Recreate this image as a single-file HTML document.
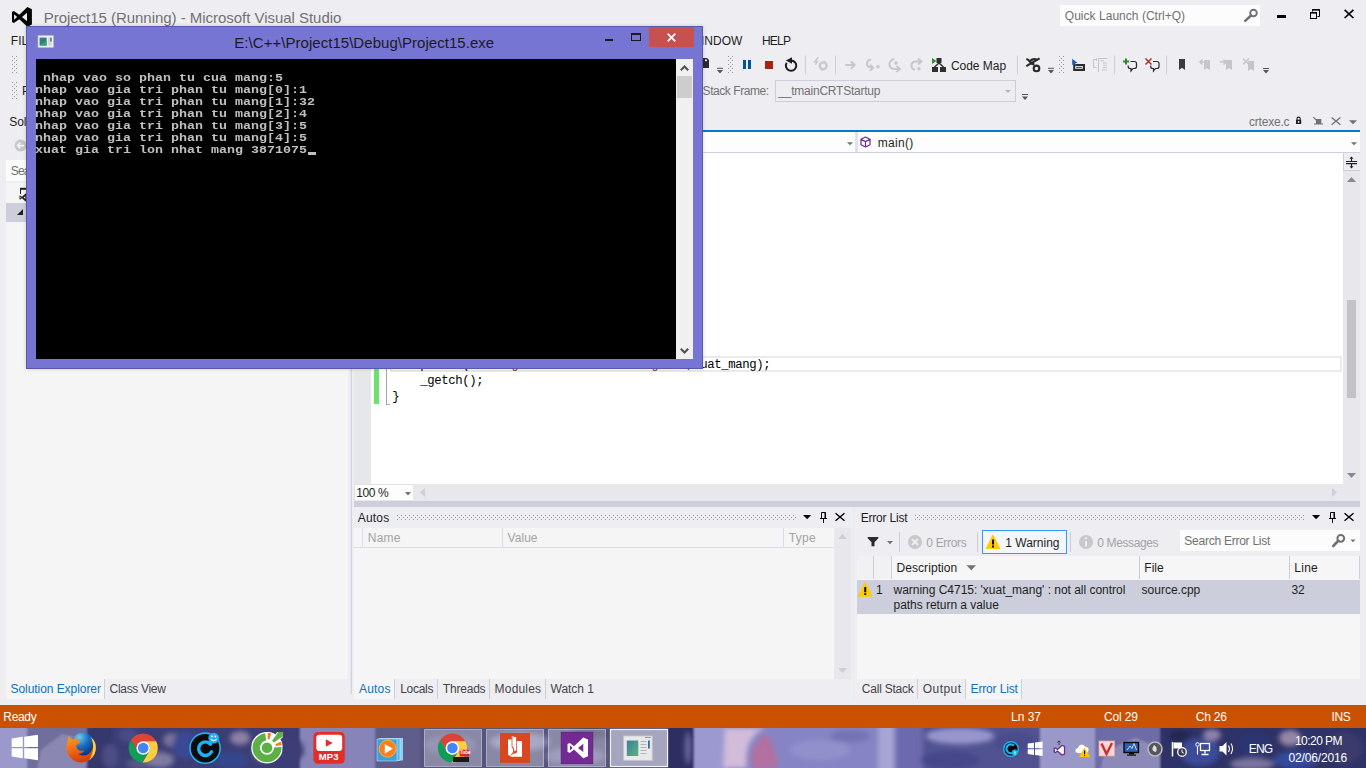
<!DOCTYPE html>
<html lang="en">
<head>
<meta charset="utf-8">
<title>Project15 (Running) - Microsoft Visual Studio</title>
<style>
*{box-sizing:border-box;margin:0;padding:0}
html,body{width:1366px;height:768px;overflow:hidden;background:#EEEEF2;font-family:"Liberation Sans",sans-serif;font-size:12px;color:#1E1E1E}
#root{position:relative;width:1366px;height:768px;overflow:hidden;background:#EEEEF2}
.a{position:absolute}
.t{position:absolute;white-space:nowrap;line-height:1;transform-origin:0 0}
.g{color:#717171}
.d{color:#A2A4A5}
.b{color:#0E70C0}
svg{position:absolute;overflow:visible}
.w{color:#fff}
.con{font-family:"Liberation Mono",monospace;font-weight:bold;font-size:13.330px;line-height:13.680px;color:#C0C0C0;white-space:pre;transform:scaleY(.88);transform-origin:0 0}
.code{white-space:pre;font-family:"Liberation Mono",monospace;font-size:12.300px;letter-spacing:-.380px;color:#000}
/*FIT*/
#t_title{left:43.7px!important;letter-spacing:-0.03px}
#t_ql{left:1064.8px!important;letter-spacing:0.03px}
#t_help{left:761.9px!important;letter-spacing:-0.74px}
#t_window{left:689.7px!important}
#t_sf{left:702.6px!important;letter-spacing:-0.44px}
#t_tm{left:778.3px!important;letter-spacing:-0.23px}
#t_main{left:877.7px!important;letter-spacing:0.30px}
#t_crt{left:1248.9px!important;letter-spacing:-0.19px}
#t_zoom{left:356.3px!important;letter-spacing:-0.43px}
#t_se{left:10.5px!important;letter-spacing:-0.06px}
#t_cv{left:109.6px!important;letter-spacing:-0.32px}
#t_autos{left:357.7px!important;letter-spacing:0.22px}
#t_name{left:367.8px!important;letter-spacing:0.20px}
#t_value{left:507.5px!important;letter-spacing:0.06px}
#t_type{left:788.8px!important;letter-spacing:0.30px}
#t_a2{left:359.1px!important;letter-spacing:0.16px}
#t_loc{left:400.2px!important;letter-spacing:-0.28px}
#t_thr{left:442.8px!important;letter-spacing:-0.20px}
#t_mod{left:494.6px!important;letter-spacing:0.19px}
#t_w1{left:550.6px!important;letter-spacing:-0.05px}
#t_el{left:860.7px!important;letter-spacing:-0.20px}
#t_err{left:926.3px!important;letter-spacing:-0.32px}
#t_warn{left:1005.3px!important;letter-spacing:-0.01px}
#t_msg{left:1097.3px!important;letter-spacing:-0.39px}
#t_sel{left:1184.3px!important;letter-spacing:-0.25px}
#t_desc{left:896.5px!important;letter-spacing:0.07px}
#t_file{left:1144.3px!important;letter-spacing:0.04px}
#t_line{left:1294.3px!important;letter-spacing:0.25px}
#t_w_a{left:893.5px!important;letter-spacing:-0.02px}
#t_w_b{left:893.5px!important;letter-spacing:-0.04px}
#t_src{left:1141.5px!important;letter-spacing:0.01px}
#t_32{left:1291.4px!important;letter-spacing:-0.03px}
#t_cs{left:861.8px!important;letter-spacing:-0.22px}
#t_out{left:922.7px!important;letter-spacing:0.48px}
#t_el2{left:970.6px!important;letter-spacing:-0.16px}
#t_ready{left:3.3px!important;letter-spacing:-0.32px}
#t_ln{left:1011.1px!important;letter-spacing:-0.05px}
#t_col{left:1103.9px!important;letter-spacing:-0.15px}
#t_ch{left:1195.7px!important;letter-spacing:-0.19px}
#t_ins{left:1331.5px!important;letter-spacing:-0.41px}
#t_ctitle{left:234.3px!important;letter-spacing:0.04px}
#t_sol{left:9.3px!important;letter-spacing:-0.06px}
#t_fil{left:10.8px!important}
#t_r1{left:875.9px!important}
#t_sea{left:10.8px!important}
#t_cm{left:950.9px!important;letter-spacing:-0.02px}
#t_mp3{left:318.8px!important;letter-spacing:0.15px}
#t_eng{left:1248.8px!important;letter-spacing:-0.91px}
#t_time{left:1294.9px!important;letter-spacing:-0.53px}
#t_date{left:1288.6px!important;letter-spacing:-0.16px}
/*ENDFIT*/
</style>
</head>
<body>
<div id="root">
<svg width="0" height="0" style="left:0;top:0"><defs><pattern id="gp" width="4" height="4" patternUnits="userSpaceOnUse"><rect x="0" y="0" width="1" height="1" fill="#999"/><rect x="2" y="2" width="1" height="1" fill="#999"/></pattern></defs></svg>

<!-- ===== VS title bar ===== -->
<svg style="left:0;top:0" width="40" height="30" viewBox="0 0 40 30"><path fill="#000" fill-rule="evenodd" d="M27.400 7 31.900 9.200V24.600L27.400 26.800 19.300 19.300 13.800 23.100 12 22.100V11.900L13.800 10.900 19.300 14.700zM27 12.800V21.200L22 17zM14.100 14.300V19.700L17.100 17z"/></svg>
<div class="t g" id="t_title" style="left:44px;top:10px;font-size:15px">Project15 (Running) - Microsoft Visual Studio</div>

<!-- quick launch -->
<div class="a" style="left:1060px;top:5px;width:200px;height:21px;background:#FCFCFC"></div>
<div class="t g" id="t_ql" style="left:1065px;top:10px;font-size:12px">Quick Launch (Ctrl+Q)</div>
<svg style="left:1243px;top:8px" width="14" height="14" viewBox="0 0 14 14"><circle cx="10.500" cy="5" r="3.300" fill="none" stroke="#717171" stroke-width="1.900"/><path d="M8 7.500 2.200 12.800" stroke="#717171" stroke-width="2.500" stroke-linecap="round"/></svg>
<!-- window buttons -->
<div class="a" style="left:1277px;top:15px;width:9px;height:3px;background:#000"></div>
<svg style="left:1309px;top:8px" width="12" height="12" viewBox="0 0 12 12"><path d="M3.5 3.5V1.5h7v7h-2" fill="none" stroke="#000" stroke-width="1"/><path d="M3.5 1.8h7" stroke="#000" stroke-width="1.6"/><rect x="1.5" y="4.5" width="6" height="6" fill="none" stroke="#000"/><path d="M1.5 4.8h6" stroke="#000" stroke-width="1.6"/></svg>
<svg style="left:1344px;top:9px" width="10" height="10" viewBox="0 0 10 10"><path d="M0.6 0.8 9.4 9M9.4 0.8 0.6 9" stroke="#000" stroke-width="1.7"/></svg>

<!-- ===== menu row ===== -->
<div class="t" id="t_fil" style="left:11px;top:35px;font-size:12px">FILE</div>
<div class="t" id="t_window" style="left:691px;top:35px;font-size:12px">WINDOW</div>
<div class="t" id="t_help" style="left:762px;top:35px;font-size:12px">HELP</div>

<!-- ===== toolbars ===== -->
<svg style="left:12px;top:56px" width="5" height="17"><rect width="5" height="17" fill="url(#gp)"/></svg>
<svg style="left:12px;top:82px" width="5" height="17"><rect width="5" height="17" fill="url(#gp)"/></svg>
<div class="t" id="t_proc" style="left:22px;top:85px">Process:</div>
<div class="t g" id="t_sf" style="left:702px;top:84.500px">Stack Frame:</div>
<div class="a" style="left:775px;top:80px;width:241px;height:22px;border:1px solid #CCCEDB;background:#EEEEF2"></div>
<div class="t g" id="t_tm" style="left:779px;top:84.500px">__tmainCRTStartup</div>

<!-- toolbar row 1 icons -->
<svg style="left:700px;top:55px" width="580" height="22" viewBox="700 55 580 22">
<!-- save-all remnant -->
<path d="M700 58h7l2 2v8h-9z" fill="#2B2B2B"/><rect x="705" y="59.5" width="2" height="1.6" fill="#fff"/>
<!-- overflow -->
<path d="M717 68.3h6" stroke="#555" stroke-width="1"/><path d="M717 70h6l-3 3.6z" fill="#555"/>
<!-- pause / stop -->
<rect x="743" y="60" width="3" height="9" fill="#00539C"/><rect x="748" y="60" width="3" height="9" fill="#00539C"/>
<rect x="765" y="61" width="8" height="8" fill="#A1260D"/>
<!-- restart -->
<path d="M791.100 60.400A5.200 5.200 0 1 1 786.700 62.800" fill="none" stroke="#1E1E1E" stroke-width="2"/><path d="M785.800 60.600 792 57.300v6.400z" fill="#1E1E1E"/>
<path d="M805.500 55.500v19M835.500 55.500v19M1017.500 55.500v19M1114.500 55.500v19M1166.500 55.500v19" stroke="#CCCEDB" stroke-width="1"/>
<!-- disabled: apply code changes -->
<g fill="none" stroke="#C8C8CC"><path d="M818.300 57.400 814.700 61.600h2.600l-2 3.200" stroke-width="1.600"/><circle cx="823.200" cy="65.800" r="3.500" stroke-width="2.300" stroke-dasharray="8.600 2.400" stroke-dashoffset="3"/></g>
<path d="M823.500 60.300l3.600 2.300-3.400 1.900zM822.900 71.300l-3.600-2.300 3.400-1.900z" fill="#C8C8CC"/>
<!-- disabled step arrows -->
<g fill="none" stroke="#C8C8CC" stroke-width="2" stroke-linejoin="round">
<path d="M845.300 65h9.500M850.800 61.300 854.800 65l-4 3.700"/>
<path d="M871 59.500q-4 .5-4 4.500 0 3.500 5.500 3.800M870 64.800l3.300 3-3.300 3"/>
<path d="M894.500 59q-5 .8-5 5.300 0 4.500 5.500 4.700h4M896.500 66l3.500 3-3.500 3"/>
<path d="M915 69.800q-3.500-.6-3.500-4.200 0-4 4.500-4.100h5M918 58.500l3.500 3-3.500 3"/>
</g>
<circle cx="878" cy="66.800" r="1.800" fill="#C8C8CC"/><circle cx="896" cy="63" r="1.800" fill="#C8C8CC"/><circle cx="919" cy="68.700" r="1.800" fill="#C8C8CC"/>
<!-- code map -->
<path d="M932 58l4.500 3-4.500 3z" fill="#388A34"/><rect x="936.500" y="58" width="5" height="5" fill="#2F2F2F"/><path d="M939 63l-4.500 4M939 63l4.500 4" stroke="#2F2F2F" stroke-width="1.500"/><rect x="932" y="67" width="6" height="5" fill="#2F2F2F"/><rect x="940" y="67" width="6" height="5" fill="#2F2F2F"/>
<!-- intellitrace-like -->
<g fill="none" stroke="#2B2B2B" stroke-width="2.100"><path d="M1026.300 59q2.200.300 3.600 2.600 1.800 2.800 4.600 2.800"/><path d="M1029.800 61.200q3.600-3.400 7.400-1.200"/><path d="M1039.600 58.300 1026.300 66.200"/><circle cx="1036.500" cy="68.400" r="2.800"/></g>
<path d="M1048 68.300h6" stroke="#555" stroke-width="1"/><path d="M1048 70h6l-3 3.600z" fill="#555"/>
<!-- find in files-like -->
<rect x="1073.200" y="64" width="11.800" height="7" fill="#2B2B2B"/><rect x="1075.200" y="66" width="7.600" height="2.800" fill="#EEEEF2"/><path d="M1076.200 67.400h5.600" stroke="#2B2B2B" stroke-width=".9"/><path d="M1072.200 58.700v6.600l1.700-1.600 1.300 2.600 1.300-.7-1.300-2.500h2.400z" fill="#1C5DAB"/>
<!-- disabled indent icon -->
<g stroke="#C6C6C8" stroke-width="1" fill="none"><path d="M1096.500 59.500h-3v8h3M1096.500 58v3M1098.500 58v14"/><path d="M1099 58.500h8M1100.500 60.800h3.500M1103 63h4M1103 65.300h4M1103 67.500h4M1102 70h5" stroke-width="1.100"/></g>
<!-- comment / uncomment -->
<path d="M1123 61.500h6M1126 58.500v6" stroke="#2C8A2C" stroke-width="2"/>
<path d="M1130.500 61.500h4q2 0 2 2v3q0 2-2 2h-1.500l-2 2.500v-2.500h-.8q-2 0-2-2v-1" fill="none" stroke="#2B2B2B" stroke-width="1.200"/>
<path d="M1145.500 58.500l6 6M1151.500 58.500l-6 6" stroke="#B0301A" stroke-width="1.500"/>
<path d="M1153 61.500h4q2 0 2 2v3q0 2-2 2h-1.500l-2 2.500v-2.500h-.8q-2 0-2-2v-1" fill="none" stroke="#2B2B2B" stroke-width="1.200"/>
<!-- bookmarks -->
<path d="M1179 59h6v11l-3-2.200-3 2.200z" fill="#3B3B3B"/>
<g fill="#C6C6C8"><path d="M1204 60h6v10l-3-2-3 2z"/><path d="M1226 60h6v10l-3-2-3 2z"/><path d="M1248 61h6v10l-3-2-3 2z"/></g>
<g fill="none" stroke="#C6C6C8" stroke-width="1.500"><path d="M1206 62h-6M1202.500 59.500l-2.500 2.500 2.500 2.500"/><path d="M1220 62h6M1223.500 59.500l2.500 2.500-2.500 2.500"/><path d="M1243 58.500l6 6M1249 58.500l-6 6"/></g>
<path d="M1263 68.500h6" stroke="#555" stroke-width="1"/><path d="M1263 70h6l-3 3.600z" fill="#555"/>
</svg>
<svg style="left:728px;top:56px" width="5" height="17"><rect width="5" height="17" fill="url(#gp)"/></svg>
<svg style="left:1059px;top:56px" width="5" height="17"><rect width="5" height="17" fill="url(#gp)"/></svg>
<div class="t" id="t_cm" style="left:951px;top:60px">Code Map</div>
<!-- row 2 extras -->
<svg style="left:1004px;top:89px" width="8" height="5" viewBox="0 0 8 5"><path d="M1 1h6L4 4z" fill="#B5B6BE"/></svg>
<svg style="left:1021px;top:93px" width="8" height="8" viewBox="0 0 8 8"><path d="M1 1.500h6" stroke="#555" stroke-width="1"/><path d="M1 3.500h6L4 7z" fill="#555"/></svg>

<!-- ===== document well ===== -->
<div class="a" style="left:354px;top:130px;width:1006px;height:2px;background:#007ACC"></div>
<div class="a" style="left:354px;top:132px;width:1006px;height:22px;background:#FDFDFD;border-bottom:2px solid #CED0DD"></div>
<div class="a" style="left:855px;top:132px;width:3px;height:20px;background:#E0E1EA"></div>
<div class="t" id="t_main" style="left:878px;top:137px">main()</div>
<div class="t g" id="t_crt" style="left:1249px;top:116px">crtexe.c</div>
<svg style="left:1290px;top:114px" width="70" height="34" viewBox="1290 114 70 34">
<path d="M1296 119.700h5.200v4.300h-5.200z" fill="#1E1E1E"/><path d="M1297 120v-1.200q0-1.700 1.600-1.700t1.600 1.700v1.200" fill="none" stroke="#1E1E1E" stroke-width="1.100"/><rect x="1297.900" y="121" width="1.400" height="1.800" fill="#EEEEF2"/>
<path d="M1316 119h5.300v4.500h-5.300zM1314 123.500h9v1.100h-9z" fill="#717171"/><path d="M1313.300 117.200l3 3" stroke="#717171" stroke-width="1.200"/>
<path d="M1331.600 117.400l8.800 7.400M1340.400 117.400l-8.800 7.400" stroke="#717171" stroke-width="1.300"/>
<path d="M1349 120.200h8l-4 4z" fill="#717171"/>
<path d="M1351 142.200h6l-3 3z" fill="#717171"/>
</svg>
<svg style="left:847px;top:142px" width="7" height="4" viewBox="0 0 7 4"><path d="M0 .2h6l-3 3z" fill="#717171"/></svg>
<svg style="left:860px;top:136px" width="11" height="12" viewBox="0 0 11 12"><path d="M5.500 1 10 3.300v5.400L5.500 11 1 8.700V3.300zM1 3.300l4.500 2.300L10 3.300M5.500 5.600V11" fill="none" stroke="#652D90" stroke-width="1.200" stroke-linejoin="round"/></svg>
<!-- editor -->
<div class="a" style="left:354px;top:153px;width:989px;height:331px;background:#fff"></div>
<div class="a" style="left:354px;top:153px;width:17px;height:331px;background:#E6E7E8"></div>
<div class="a" style="left:1343px;top:153px;width:17px;height:331px;background:#E8E8EC"></div>
<div class="a" style="left:1347px;top:300px;width:9px;height:98px;background:#C2C3C9"></div>
<div class="a" style="left:1343px;top:153px;width:17px;height:18px;background:#EEEEF2;border-left:1px solid #CCCEDB;border-bottom:1px solid #CCCEDB"></div>
<svg style="left:1346px;top:156px" width="12" height="13" viewBox="0 0 12 13"><path d="M0 5.500h11M0 7.600h11" stroke="#1E1E1E" stroke-width="1.100"/><path d="M5.500 5V1.500M5.500 8v3.500" stroke="#1E1E1E" stroke-width="1.100"/><path d="M3.500 2.800 5.500.4l2 2.400zM3.500 10.200l2 2.400 2-2.400z" fill="#1E1E1E"/></svg>
<svg style="left:1347px;top:177px" width="9" height="5" viewBox="0 0 9 5"><path d="M4.500 0 9 5H0z" fill="#868999"/></svg>
<svg style="left:1347px;top:473px" width="9" height="5" viewBox="0 0 9 5"><path d="M4.500 5 9 0H0z" fill="#868999"/></svg>
<div class="a" style="left:354px;top:484px;width:1006px;height:17px;background:#E8E8EC"></div>
<div class="a" style="left:354px;top:484px;width:59px;height:16px;background:#FDFDFD;border:1px solid #DFE0EA;border-right:0;border-bottom:0"></div>
<svg style="left:405px;top:492px" width="6" height="4" viewBox="0 0 6 4"><path d="M0 0h6L3 3.500z" fill="#717171"/></svg>
<svg style="left:420px;top:488px" width="5" height="9" viewBox="0 0 5 9"><path d="M5 0v9L0 4.500z" fill="#CDCED6"/></svg>
<svg style="left:1332px;top:488px" width="5" height="9" viewBox="0 0 5 9"><path d="M0 0v9L5 4.500z" fill="#CDCED6"/></svg>
<div class="t" id="t_zoom" style="left:357px;top:487px">100 %</div>
<div class="a" style="left:354px;top:501px;width:1006px;height:6px;background:#CCCEDB"></div>
<div class="a" style="left:853px;top:508px;width:1px;height:192px;background:#E7E8F0"></div><div class="a" style="left:350px;top:104px;width:1px;height:590px;background:#E4E5EE"></div><div class="a" style="left:351px;top:104px;width:1px;height:590px;background:#D2D3E0"></div>
<!-- code -->
<div class="a" style="left:390px;top:356px;width:952px;height:16px;border:2px solid #EAEAEA"></div>
<div class="a" style="left:374px;top:369px;width:5px;height:35px;background:#6CE26C"></div>
<div class="a" style="left:386px;top:369px;width:4px;height:36px;border-left:1px solid #A5A5A5;border-bottom:1px solid #A5A5A5"></div>
<pre class="t code" id="c1" style="left:392.200px;top:359.200px">    printf(<span style="color:#A31515">"xuat gia tri lon nhat mang %d"</span>,xuat_mang);</pre>
<pre class="t code" id="c2" style="left:392.200px;top:375.200px">    _getch();</pre>
<pre class="t code" id="c3" style="left:392.200px;top:391.200px">}</pre>

<!-- ===== Solution Explorer (left) ===== -->
<div class="t" id="t_sol" style="left:10px;top:116px">Solution Explorer</div>
<svg style="left:14px;top:139px" width="13" height="13" viewBox="0 0 13 13"><circle cx="6.600" cy="6.600" r="6" fill="#C6C6C8"/><path d="M10 6.600H4M6.300 3.800 3.500 6.600 6.300 9.400" fill="none" stroke="#F5F5F7" stroke-width="1.600"/></svg>
<div class="a" style="left:6px;top:160px;width:342px;height:21px;background:#FCFCFC"></div>
<div class="t g" id="t_sea" style="left:11px;top:165px;letter-spacing:-.900px">Search Solution Explorer (Ctrl+;)</div>
<div class="a" style="left:6px;top:183px;width:342px;height:496px;background:#F5F5F5"></div>
<div class="a" style="left:6px;top:203px;width:342px;height:19px;background:#CCCEDB"></div>
<svg style="left:19px;top:187px" width="14" height="15" viewBox="0 0 14 15"><path d="M1.500 7V1.500h11V13" fill="none" stroke="#1E1E1E" stroke-width="1"/><path d="M1 1.800h12" stroke="#1E1E1E" stroke-width="2"/><path fill="#1E1E1E" fill-rule="evenodd" d="M6.500 6.500 8.500 7.500v6l-2 1-3.500-3.300-1.800 1.400-.7-.4V8.800l.7-.4 1.800 1.400zM6.300 9v3L4.600 10.500zM1.500 9.600v1.800l.9-.9z"/></svg>
<svg style="left:16px;top:208px" width="8" height="8" viewBox="0 0 8 8"><path d="M7 1v6H1z" fill="#1E1E1E"/></svg>
<div class="a" style="left:6px;top:679px;width:99px;height:20px;background:#F5F5F5;border-right:1px solid #CCCEDB"></div>
<div class="t b" id="t_se" style="left:11px;top:683px">Solution Explorer</div>
<div class="t" id="t_cv" style="left:110px;top:683px;color:#444">Class View</div>

<!-- ===== Autos panel ===== -->
<div class="t" id="t_autos" style="left:358px;top:512px">Autos</div>
<svg style="left:397px;top:515px" width="399" height="5"><rect width="399" height="5" fill="url(#gp)"/></svg>
<svg style="left:803px;top:511px" width="44" height="13" viewBox="0 0 44 13"><path d="M0 4h8.200L4.100 8.200z" fill="#000"/><path d="M18.500 1.500h4v6h-4z" fill="none" stroke="#000" stroke-width="1"/><path d="M21.500 1.500h1.500v6h-1.500zM17 7h7v1h-7zM20 8h1v4h-1z" fill="#000"/><path d="M32.500 2.300 41.500 9.700M41.500 2.300 32.500 9.700" stroke="#000" stroke-width="1.400"/></svg>
<div class="a" style="left:354px;top:528px;width:497px;height:151px;background:#F5F5F5"></div>
<div class="a" style="left:354px;top:528px;width:480px;height:20px;border-bottom:1px solid #DCDDE6"></div>
<div class="a" style="left:362px;top:528px;width:1px;height:19px;background:#DCDDE6"></div>
<div class="a" style="left:502px;top:528px;width:1px;height:19px;background:#DCDDE6"></div>
<div class="a" style="left:783px;top:528px;width:1px;height:19px;background:#DCDDE6"></div>
<div class="t d" id="t_name" style="left:368px;top:532px">Name</div>
<div class="t d" id="t_value" style="left:508px;top:532px">Value</div>
<div class="t d" id="t_type" style="left:789px;top:532px">Type</div>
<div class="a" style="left:834px;top:528px;width:17px;height:151px;background:#E8E8EC"></div>
<svg style="left:838px;top:534px" width="9" height="5" viewBox="0 0 9 5"><path d="M4.500 0 9 5H0z" fill="#CDCED6"/></svg>
<svg style="left:838px;top:668px" width="9" height="5" viewBox="0 0 9 5"><path d="M4.500 5 9 0H0z" fill="#CDCED6"/></svg>
<div class="a" style="left:354px;top:679px;width:41px;height:20px;background:#F5F5F5;border-right:1px solid #CCCEDB"></div>
<div class="a" style="left:437px;top:679px;width:1px;height:20px;background:#CCCEDB"></div><div class="a" style="left:489px;top:679px;width:1px;height:20px;background:#CCCEDB"></div><div class="a" style="left:545px;top:679px;width:1px;height:20px;background:#CCCEDB"></div>
<div class="t b" id="t_a2" style="left:359px;top:683px">Autos</div>
<div class="t" id="t_loc" style="left:400px;top:683px;color:#444">Locals</div>
<div class="t" id="t_thr" style="left:443px;top:683px;color:#444">Threads</div>
<div class="t" id="t_mod" style="left:495px;top:683px;color:#444">Modules</div>
<div class="t" id="t_w1" style="left:551px;top:683px;color:#444">Watch 1</div>

<!-- ===== Error List panel ===== -->
<div class="t" id="t_el" style="left:861px;top:512px">Error List</div>
<svg style="left:915px;top:515px" width="389" height="5"><rect width="389" height="5" fill="url(#gp)"/></svg>
<svg style="left:1312px;top:511px" width="44" height="13" viewBox="0 0 44 13"><path d="M0 4h8.200L4.100 8.200z" fill="#000"/><path d="M18.500 1.500h4v6h-4z" fill="none" stroke="#000" stroke-width="1"/><path d="M21.500 1.500h1.500v6h-1.500zM17 7h7v1h-7zM20 8h1v4h-1z" fill="#000"/><path d="M32.500 2.300 41.500 9.700M41.500 2.300 32.500 9.700" stroke="#000" stroke-width="1.400"/></svg>
<div class="a" style="left:857px;top:556px;width:503px;height:123px;background:#F6F6F6"></div>
<div class="a" style="left:857px;top:580px;width:503px;height:34px;background:#CCCEDB"></div>
<div class="a" style="left:857px;top:556px;width:34px;height:23px;background:#F1F1F4"></div>
<svg style="left:857px;top:528px" width="503" height="72" viewBox="857 528 503 72">
<path d="M867.700 537h10.600v1.200l-3.800 4v4h-3v-4l-3.800-4z" fill="#2B2B2B"/>
<path d="M887 541h6l-3 3.200z" fill="#717171"/>
<path d="M899.500 532v20M977.500 532v20M1070.500 532v20" stroke="#CCCEDB" stroke-width="1"/>
<circle cx="915" cy="542" r="7" fill="#C8C8CA"/><path d="M912 539l6 6M918 539l-6 6" stroke="#EEEEF2" stroke-width="2"/>
<circle cx="1086" cy="542" r="7" fill="#C8C8CA"/><path d="M1086 541v5.500" stroke="#EEEEF2" stroke-width="2"/><circle cx="1086" cy="538.300" r="1.200" fill="#EEEEF2"/>
<path d="M873.500 556v23M891.500 556v23M1139.500 556v23M1289.500 556v23M1359.500 556v23" stroke="#CCCEDB" stroke-width="1"/>
<path d="M966.500 565.200h9.500l-4.750 5z" fill="#717171"/>
<g id="wtri"><path d="M865.200 582.600q.6 0 1 .7l6 12.200q.5 1.200-.8 1.200h-12.400q-1.300 0-.8-1.200l6-12.200q.4-.7 1-.7z" fill="#FFCC00"/><path d="M864.300 587h1.900v5.200h-1.900zM864.300 593.200h1.900v1.900h-1.900z" fill="#000"/></g>
</svg>
<div class="t d" id="t_err" style="left:927px;top:537px">0 Errors</div>
<div class="a" style="left:982px;top:530px;width:85px;height:24px;border:1px solid #3399FF;background:#F3F6FA"></div>
<svg style="left:985px;top:534px" width="16" height="16" viewBox="857.200 581.600 16 16"><use href="#wtri"/></svg>
<div class="t" id="t_warn" style="left:1006px;top:537px">1 Warning</div>
<div class="t d" id="t_msg" style="left:1098px;top:537px">0 Messages</div>
<div class="a" style="left:1180px;top:530px;width:180px;height:21px;background:#FCFCFC"></div>
<div class="t g" id="t_sel" style="left:1185px;top:535px">Search Error List</div>
<svg style="left:1328px;top:532px" width="32" height="18" viewBox="1328 532 32 18"><circle cx="1340.800" cy="538.300" r="3.400" fill="none" stroke="#717171" stroke-width="2"/><path d="M1338 541 1333.300 546" stroke="#717171" stroke-width="2.600" stroke-linecap="round"/>
<path d="M1350.500 539.500h5l-2.500 2.700z" fill="#717171"/>
</svg>
<div class="t" id="t_desc" style="left:897px;top:562px">Description</div>
<div class="t" id="t_file" style="left:1145px;top:562px">File</div>
<div class="t" id="t_line" style="left:1295px;top:562px">Line</div>
<div class="t" id="t_r1" style="left:876px;top:584px">1</div>
<div class="t" id="t_w_a" style="left:894px;top:584px">warning C4715: 'xuat_mang' : not all control</div>
<div class="t" id="t_w_b" style="left:894px;top:599px">paths return a value</div>
<div class="t" id="t_src" style="left:1142px;top:584px">source.cpp</div>
<div class="t" id="t_32" style="left:1292px;top:584px">32</div>
<div class="a" style="left:966px;top:679px;width:56px;height:20px;background:#F5F5F5;border-right:1px solid #CCCEDB"></div>
<div class="a" style="left:917px;top:679px;width:1px;height:20px;background:#CCCEDB"></div><div class="a" style="left:965px;top:679px;width:1px;height:20px;background:#CCCEDB"></div>
<div class="t" id="t_cs" style="left:862px;top:683px;color:#444">Call Stack</div>
<div class="t" id="t_out" style="left:923px;top:683px;color:#444">Output</div>
<div class="t b" id="t_el2" style="left:971px;top:683px">Error List</div>

<!-- ===== status bar ===== -->
<div class="a" style="left:0;top:705px;width:1366px;height:23px;background:#CA5100"></div>
<div class="t w" id="t_ready" style="left:4px;top:711px">Ready</div>
<div class="t w" id="t_ln" style="left:1012px;top:711px">Ln 37</div>
<div class="t w" id="t_col" style="left:1104px;top:711px">Col 29</div>
<div class="t w" id="t_ch" style="left:1196px;top:711px">Ch 26</div>
<div class="t w" id="t_ins" style="left:1332px;top:711px">INS</div>

<!-- ===== taskbar ===== -->
<div class="a" id="taskbar" style="left:0;top:728px;width:1366px;height:40px;background:#8583C4;overflow:hidden">
<svg style="left:0;top:0" width="1366" height="40" viewBox="0 728 1366 40">
<defs><filter id="bl" x="-5%" y="-50%" width="110%" height="200%"><feGaussianBlur stdDeviation="2.500"/></filter><filter id="bl1" x="-5%" y="-50%" width="110%" height="200%"><feGaussianBlur stdDeviation="1.200"/></filter></defs>
<g filter="url(#bl1)">
<rect x="-10" y="720" width="38" height="60" fill="#9B99CC"/>
<rect x="27" y="720" width="62" height="60" fill="#6F6E9C"/>
<path d="M36 775 41 750 62 734 90 741 85 775z" fill="#8A88B3"/>
<rect x="87" y="720" width="27" height="60" fill="#36376C"/>
<rect x="112" y="720" width="190" height="60" fill="#3A3D75"/>
<rect x="300" y="720" width="78" height="60" fill="#8684B8"/>
<rect x="375" y="720" width="48" height="60" fill="#5E5D8A"/>
<rect x="420" y="720" width="250" height="60" fill="#56547F"/>
<rect x="668" y="720" width="27" height="60" fill="#2D2E62"/>
<rect x="694" y="720" width="220" height="60" fill="#8684C4"/>
<rect x="694" y="720" width="34" height="60" fill="#9B99D0"/>
<rect x="912" y="720" width="130" height="60" fill="#515291"/>
<rect x="1040" y="720" width="56" height="60" fill="#9A98C8"/>
<rect x="1095" y="720" width="70" height="60" fill="#6E6CA6"/>
<path d="M1100 775 1104 752 1135 738 1160 748 1165 775z" fill="#8C8AB9"/>
<rect x="1160" y="720" width="220" height="60" fill="#2E3066"/>
</g>
<g filter="url(#bl)">
<!-- people blobs left -->
<ellipse cx="172" cy="740" rx="9" ry="7" fill="#7A7298"/><ellipse cx="262" cy="752" rx="9" ry="10" fill="#6E6A96"/><ellipse cx="140" cy="764" rx="14" ry="5" fill="#5A5888"/>
<ellipse cx="160" cy="760" rx="14" ry="8" fill="#7E7AA0"/><ellipse cx="128" cy="735" rx="10" ry="7" fill="#4A4C86"/>
<ellipse cx="185" cy="745" rx="12" ry="14" fill="#3A4A94"/><ellipse cx="240" cy="738" rx="10" ry="7" fill="#8C80A4"/>
<ellipse cx="232" cy="760" rx="16" ry="8" fill="#36468E"/><ellipse cx="290" cy="750" rx="14" ry="12" fill="#3C3E78"/>
<ellipse cx="110" cy="756" rx="8" ry="12" fill="#4E4D86"/>
<!-- middle -->
<path d="M725 728q20 0 40 0-22 10-18 40h-24z" fill="#D2BCDA"/>
<path d="M752 768q-4-22 14-34 8 8 12 34z" fill="#B4709E"/>
<ellipse cx="688" cy="748" rx="3" ry="16" fill="#6C6CA0"/>
<rect x="878" y="724" width="16" height="50" fill="#A6A5D4"/><rect x="895" y="724" width="28" height="50" fill="#6C6BAE"/>
<ellipse cx="960" cy="736" rx="34" ry="8" fill="#9896CC"/><ellipse cx="950" cy="760" rx="30" ry="9" fill="#44468A"/><ellipse cx="1015" cy="742" rx="20" ry="10" fill="#494B8C"/>
<ellipse cx="820" cy="750" rx="30" ry="10" fill="#9290CC"/><ellipse cx="850" cy="736" rx="20" ry="6" fill="#7472B4"/>
<!-- taskbar button photo area -->
<ellipse cx="450" cy="745" rx="26" ry="10" fill="#6A6894"/><ellipse cx="520" cy="742" rx="30" ry="9" fill="#8482AC"/><ellipse cx="575" cy="756" rx="30" ry="9" fill="#7472A0"/><ellipse cx="590" cy="734" rx="18" ry="5" fill="#3E3C64"/>
<!-- right people -->
<ellipse cx="1200" cy="752" rx="20" ry="14" fill="#3A4C98"/><ellipse cx="1212" cy="735" rx="9" ry="6" fill="#8E82A8"/>
<ellipse cx="1255" cy="745" rx="18" ry="12" fill="#2C3472"/><ellipse cx="1252" cy="764" rx="22" ry="6" fill="#7C749C"/>
<ellipse cx="1290" cy="738" rx="11" ry="8" fill="#9486A6"/><ellipse cx="1295" cy="760" rx="22" ry="9" fill="#36489A"/>
<ellipse cx="1345" cy="748" rx="18" ry="16" fill="#3A3A6C"/><ellipse cx="1180" cy="736" rx="10" ry="6" fill="#24264E"/>
</g>
</svg>
<svg style="left:0;top:0" width="1366" height="40" viewBox="0 728 1366 40">
<!-- task buttons -->
<g fill="rgba(255,255,255,.30)" stroke="rgba(255,255,255,.42)" stroke-width="1"><rect x="424.500" y="729.500" width="57" height="37"/><rect x="486.500" y="729.500" width="57" height="37"/><rect x="548.500" y="729.500" width="57" height="37"/></g>
<rect x="610.500" y="729.500" width="57" height="37" fill="rgba(215,215,232,.62)" stroke="rgba(255,255,255,.9)" stroke-width="1.200"/>
<!-- windows logo -->
<path d="M11.700 738.400 22.800 736.850V746.900H11.700zM24.200 736.650 38 734.700V746.900H24.200zM11.700 748.200H22.800V758.150L11.700 756.600zM24.200 748.200H38V760.300L24.200 758.350z" fill="#fff"/>
<!-- firefox -->
<defs><radialGradient id="ffg" cx=".35" cy=".2" r=".9"><stop offset="0" stop-color="#6CCBF4"/><stop offset=".45" stop-color="#1B6CC0"/><stop offset="1" stop-color="#0A2468"/></radialGradient><linearGradient id="ffo" x1="0" y1="0" x2=".3" y2="1"><stop offset="0" stop-color="#F9A11B"/><stop offset=".5" stop-color="#F0701A"/><stop offset="1" stop-color="#D4400C"/></linearGradient></defs>
<circle cx="82.700" cy="744.500" r="11.800" fill="url(#ffg)"/>
<path d="M69 735.500C70 738 71 739 73 739.500L77 737.500C77 740 78 741 80.500 741.500L79 743.500C77.500 744 76 745 76.500 747 77 750 80 751.500 84.500 750.500 83 753 80 754 78 753.500 82 757 89 756 92 750 94 746 93.500 741 91 737.500 96 741 97 748 94.500 754 91 761 83 764.500 75.500 761.500 68 758 65 750 67 743 67.500 740 68 738 69 735.500z" fill="url(#ffo)"/>
<path d="M91 737.500C96 741 97 748 94.500 754 93 757 91 759 89 760.500 94 753 94.500 744 91 737.500z" fill="#FFD43A"/>
<!-- chrome -->
<g id="chr"><g transform="translate(143.200 748)"><path d="M-12.29 -7.88A14.6 14.6 0 0 1 12.97 -6.7L0 -6.7A6.7 6.7 0 0 0 -5.80 3.35z" fill="#DB4437"/><path d="M-12.29 -7.88A14.6 14.6 0 0 1 12.97 -6.7L0 -6.7A6.7 6.7 0 0 0 -5.80 3.35z" fill="#FFCD40" transform="rotate(120)"/><path d="M-12.29 -7.88A14.6 14.6 0 0 1 12.97 -6.7L0 -6.7A6.7 6.7 0 0 0 -5.80 3.35z" fill="#0F9D58" transform="rotate(240)"/><circle r="6.800" fill="#fff"/><circle r="5.300" fill="#4285F4"/></g></g>
<!-- C icon -->
<circle cx="205.100" cy="748.200" r="15.100" fill="#0C0C0C" stroke="#1FB0F5" stroke-width="1.600"/><path d="M210.600 744.200A6.800 6.800 0 1 0 211.500 751.800" fill="none" stroke="#1FB0F5" stroke-width="3.400" stroke-linecap="round"/>
<path d="M209.500 741.500l-1.500 4 4-2z" fill="#1FB0F5"/><circle cx="213.700" cy="738.100" r="5.400" fill="#1FB0F5"/><path d="M210.800 739q2.900 3.300 5.800 0" fill="none" stroke="#fff" stroke-width="1.100"/><circle cx="212" cy="736.400" r=".9" fill="#fff"/><circle cx="215.400" cy="736.400" r=".9" fill="#fff"/>
<!-- coc coc -->
<defs><clipPath id="ccc"><rect x="-17" y="-15.700" width="32.600" height="33"/></clipPath></defs>
<g transform="translate(267 747.700)" clip-path="url(#ccc)"><circle r="15.100" fill="#5DB045" stroke="#fff" stroke-width="1.300"/><path d="M0 0L-1.91 -15.58A15.700 15.700 0 0 1 15.68 -0.82z" fill="#fff"/><path d="M5.30 -3.18L22.27 -14.50L14.50 -22.27L3.18 -5.30z" fill="#fff"/><circle r="6.200" fill="#5DB045" stroke="#fff" stroke-width="1.800"/><path d="M2.36 -8.21L4.24 -14.28L0.90 -14.87L0.59 -8.53z" fill="#F47B20"/><path d="M6.93 -5.09L21.39 -15.38L15.38 -21.39L5.09 -6.93z" fill="#5DB045"/><path d="M8.87 -1.77L14.87 -2.66L13.82 -6.11L8.34 -3.49z" fill="#F47B20"/></g>
<!-- MP3 -->
<rect x="313.400" y="732" width="31.400" height="31.800" rx="4.500" fill="#E52D27"/><rect x="316.300" y="734.800" width="25.900" height="16.100" rx="3" fill="#fff"/><path d="M325.800 739.200v7.600l6.900-3.800z" fill="#E52D27"/>
<!-- WMP -->
<path d="M381 738h22v22.500h-22z" fill="#8FD0F2"/><path d="M379 738.500h21v22h-21z" fill="#5CB8E8" stroke="#BFE6FA" stroke-width=".6"/><path d="M377 739h20v22h-20z" fill="#3E9FDC" stroke="#BFE6FA" stroke-width=".6"/><circle cx="387.600" cy="748.700" r="8.500" fill="#F58220" stroke="#FBB040" stroke-width="1"/><path d="M384.800 744v9.400l8-4.700z" fill="#fff"/>
<!-- chrome 2 -->
<use href="#chr" x="309.200" y="0"/><rect x="459.600" y="749.800" width="9.400" height="6.800" rx="1" fill="#D92B25"/><rect x="453" y="757" width="16" height="5" fill="#1A1A1A"/>
<!-- office lens-ish -->
<rect x="500" y="733" width="30" height="29.900" fill="#D8471F"/><path d="M508 739.500H511.700V736.100L516.500 737.600V740.900H522V756.800H511.500L508 754.800z" fill="#fff"/><g fill="none" stroke="#D8471F"><path d="M512 736.300V746.500M516.600 737.800V752.600" stroke-width=".800"/><path d="M511.900 746.300Q516 750.600 511.300 755.200" stroke-width="1.100"/></g><path d="M513.800 751.400 516.600 750.200V752.800L513.200 754.200z" fill="#D8471F"/>
<!-- VS -->
<rect x="561.200" y="732.200" width="31.600" height="31.500" fill="#742A93" stroke="#5C1F78" stroke-width=".8"/><path d="M583.300 737.500 588 739.500v16.800l-4.700 2-9.300-8.700-4.200 3.300-2.300-1.100v-7.800l2.300-1.100 4.200 3.300zM570 745.300v5.200l2.600-2.600zM578 747.900l5.300 4.100v-8.200z" fill="#fff"/>
<!-- console -->
<rect x="623.700" y="736" width="28.500" height="24.300" fill="#E9E9EC" stroke="#C9C9D0" stroke-width=".8"/><defs><linearGradient id="cg" x1="0" y1="0" x2="1" y2="1"><stop offset="0" stop-color="#3F7F9C"/><stop offset="1" stop-color="#58B47A"/></linearGradient></defs><rect x="626.800" y="740.500" width="11.500" height="15.500" fill="url(#cg)"/><path d="M640.500 741.500h6M640.500 744.500h6M640.500 747.500h6M640.500 750.500h6M640.500 753.500h6" stroke="#B4B4B8" stroke-width="1"/><rect x="648" y="740.500" width="1.800" height="8" fill="#2F6FA8"/><path d="M645.500 737.500h1M647.500 737.500h1M649.500 737.500h1" stroke="#444" stroke-width="1"/>
<!-- tray -->
<circle cx="1011" cy="749" r="7.300" fill="#0A0A0A" stroke="#19B5F1" stroke-width="1.500"/><path d="M1014 745.500a4.500 4.500 0 1 0 .5 6" fill="none" stroke="#19B5F1" stroke-width="2.200"/><circle cx="1014.800" cy="752.500" r="3" fill="#19B5F1"/><rect x="1014.400" y="751.500" width="1" height="3" fill="#fff"/>
<path d="M1027.700 743.600 1034 742.700V748.300H1027.700zM1035 742.550 1042.600 741.500V748.300H1035zM1027.700 749.300H1034V754.900L1027.700 754zM1035 749.300H1042.600V756L1035 754.950z" fill="#fff"/>
<path d="M1062 745.500 1064.500 746.500v7.500l-2.500 1-4.500-4-2 1.600-1.200-.6v-3.500l1.200-.6 2 1.600z" fill="#fff" stroke="#6A2C91" stroke-width="1.300"/><path d="M1059 745v-4M1057.500 742.500l1.500-1.700 1.500 1.700" stroke="#333" stroke-width=".9" fill="none"/>
<path d="M1078.500 753.500q-3.500 0-3.500-3 0-2.500 2.800-2.800.5-3.500 4-3.500 2.600 0 3.600 2.300 3.600-.3 3.600 3.200 0 3-3 3.800z" fill="#fff" stroke="#888" stroke-width=".6"/><path d="M1084.500 747.500l5.500 9.500h-11z" fill="#FFCC00"/><rect x="1084" y="750.500" width="1.100" height="3.500" fill="#000"/><rect x="1084" y="754.800" width="1.100" height="1.100" fill="#000"/>
<rect x="1099" y="741" width="15.500" height="15" fill="#F7DADA" stroke="#E9A0A0" stroke-width=".8"/><path d="M1101.500 743.500 1106.500 754 1112 743" fill="none" stroke="#D22B2B" stroke-width="2.400"/>
<rect x="1124" y="742.500" width="14.500" height="10" fill="#2C5FB0" stroke="#0A0A0A" stroke-width="1.400"/><rect x="1129" y="753" width="5" height="1.500" fill="#0A0A0A"/><rect x="1127" y="754.500" width="9" height="1.200" fill="#0A0A0A"/><path d="M1127 750l3-4 2 2.500 2-5 2.500 6.500" fill="none" stroke="#BFD6F5" stroke-width="1"/>
<circle cx="1155" cy="749" r="7" fill="#55555C" stroke="#B9B9BE" stroke-width="1.600"/><path d="M1154 745q4 2 2 7-4-.5-3.500-4z" fill="#E0E0E0"/>
<path d="M1172.500 742v14.500" stroke="#fff" stroke-width="1.500"/><path d="M1173.500 742.500h8.500v6h-8.500z" fill="#fff"/><circle cx="1182" cy="752" r="4.300" fill="#3A3A55" stroke="#fff" stroke-width="1.300"/><path d="M1182 749.500v2.700l1.800 1" fill="none" stroke="#fff" stroke-width="1"/>
<rect x="1200.500" y="743.500" width="9" height="7" fill="none" stroke="#fff" stroke-width="1.300"/><path d="M1205 750.500v3M1201.500 754.500h7" stroke="#fff" stroke-width="1.300"/><circle cx="1197.500" cy="744.500" r="1.800" fill="none" stroke="#fff" stroke-width="1"/><path d="M1197.500 746.500v8" stroke="#fff" stroke-width="1.100"/>
<path d="M1219.500 746h3l4-4v13.500l-4-4h-3z" fill="#fff"/><path d="M1228.500 745.500q1.800 3 0 6.500M1231 743.500q3 5 0 10.500" fill="none" stroke="#fff" stroke-width="1.100"/>
</svg>
</div>
<div class="t w" id="t_mp3" style="left:319px;top:752px;font-size:9.500px;font-weight:bold">MP3</div>
<div class="t w" id="t_tube" style="left:460px;top:750.500px;font-size:4.500px;font-weight:bold">Tube</div>
<div class="t w" id="t_eng" style="left:1249px;top:742.500px">ENG</div>
<div class="t w" id="t_time" style="left:1295px;top:735px">10:20 PM</div>
<div class="t w" id="t_date" style="left:1289px;top:752px">02/06/2016</div>

<!-- ===== console window ===== -->
<div class="a" id="con" style="left:26px;top:26px;width:677px;height:343px;background:#7775D4;border:1px solid #5A58AE;box-shadow:0 0 4px rgba(0,0,0,.16)"></div>
<div class="a" style="left:36px;top:59px;width:640px;height:300px;background:#000"></div>
<!-- console icon -->
<svg style="left:38px;top:35px" width="16" height="13" viewBox="0 0 16 13"><rect x="0" y="0.5" width="15.5" height="12" fill="#F0F0F0" stroke="#B8B8C8" stroke-width="0.6"/><rect x="1.6" y="2.6" width="7" height="8" fill="#2E7F86"/><path d="M1.6 10.6h7V6z" fill="#3CA56A"/><rect x="10" y="2.6" width="3.6" height="8" fill="#D8D8D8"/><rect x="12.3" y="2.6" width="1.3" height="4" fill="#2B6CA8"/></svg>
<div class="t" id="t_ctitle" style="left:235px;top:35px;font-size:15px;color:#1b1b1b">E:\C++\Project15\Debug\Project15.exe</div>
<!-- caption buttons -->
<div class="a" style="left:605px;top:39px;width:8px;height:2px;background:#1b1b1b"></div>
<div class="a" style="left:631px;top:33px;width:10px;height:8px;border:1px solid #1b1b1b;border-top-width:2px"></div>
<div class="a" style="left:649px;top:27px;width:45px;height:20px;background:#C75050"></div>
<svg style="left:667px;top:33px" width="9" height="9" viewBox="0 0 9 9"><path d="M0.7 0.7 8.3 8.3M8.3 0.7 0.7 8.3" stroke="#fff" stroke-width="1.7"/></svg>
<!-- console scrollbar -->
<div class="a" style="left:676px;top:59px;width:17px;height:300px;background:#F0F0F0"></div>
<div class="a" style="left:677px;top:76px;width:15px;height:22px;background:#CDCDCD"></div>
<svg style="left:680px;top:65px" width="9" height="6" viewBox="0 0 9 6"><path d="M0.800 5.300 4.500 1.500 8.200 5.300" fill="none" stroke="#505050" stroke-width="2"/></svg>
<svg style="left:680px;top:348px" width="9" height="6" viewBox="0 0 9 6"><path d="M0.800 .700 4.500 4.500 8.200 .700" fill="none" stroke="#505050" stroke-width="2"/></svg>
<pre class="a con" style="left:35px;top:59.500px">

 nhap vao so phan tu cua mang:5
nhap vao gia tri phan tu mang[0]:1
nhap vao gia tri phan tu mang[1]:32
nhap vao gia tri phan tu mang[2]:4
nhap vao gia tri phan tu mang[3]:5
nhap vao gia tri phan tu mang[4]:5
xuat gia tri lon nhat mang 3871075</pre>
<div class="a" style="left:308px;top:152px;width:8px;height:3px;background:#C0C0C0"></div>

</div>
</body>
</html>
